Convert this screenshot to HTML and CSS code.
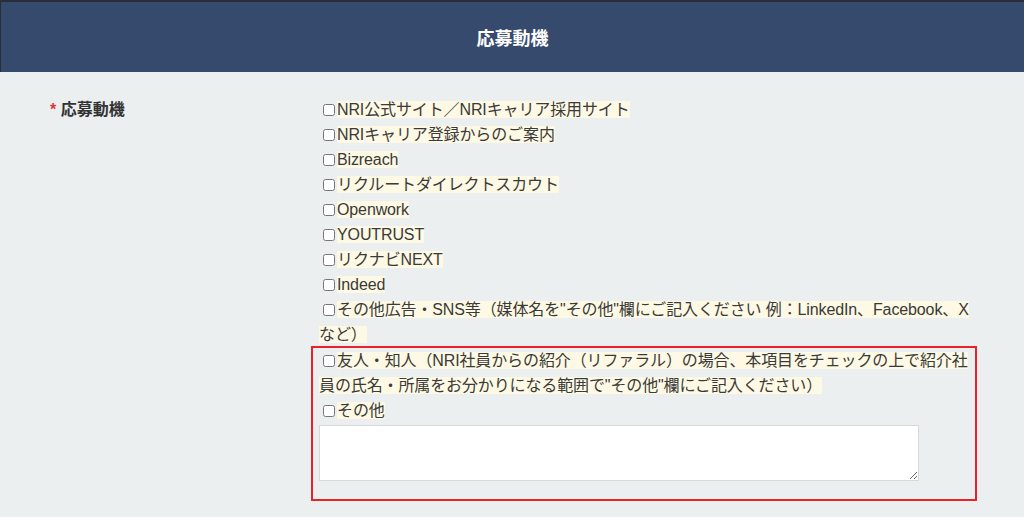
FILE: index.html
```html
<!DOCTYPE html>
<html lang="ja">
<head>
    <meta charset="UTF-8">
    <meta name="viewport" content="width=device-width, initial-scale=1.0">
    <title>応募動機</title>
    <link rel="stylesheet" href="styles.css">
</head>
<body>
    <div class="section-head">
        <h2>応募動機</h2>
    </div>

    <div class="form-row">
        <div class="field-label"><span class="req">*</span> 応募動機</div>

        <div class="field-body">
            <label class="opt"><input type="checkbox"><span class="txt">NRI公式サイト／NRIキャリア採用サイト</span></label>
            <label class="opt"><input type="checkbox"><span class="txt">NRIキャリア登録からのご案内</span></label>
            <label class="opt"><input type="checkbox"><span class="txt">Bizreach</span></label>
            <label class="opt"><input type="checkbox"><span class="txt">リクルートダイレクトスカウト</span></label>
            <label class="opt"><input type="checkbox"><span class="txt">Openwork</span></label>
            <label class="opt"><input type="checkbox"><span class="txt">YOUTRUST</span></label>
            <label class="opt"><input type="checkbox"><span class="txt">リクナビNEXT</span></label>
            <label class="opt"><input type="checkbox"><span class="txt">Indeed</span></label>
            <label class="opt"><input type="checkbox"><span class="txt">その他広告・SNS等（媒体名を"その他"欄にご記入ください 例：LinkedIn、Facebook、Xなど）</span></label>

            <!-- highlighted block -->
            <div class="mark-box">
                <label class="opt"><input type="checkbox"><span class="txt">友人・知人（NRI社員からの紹介（リファラル）の場合、本項目をチェックの上で紹介社員の氏名・所属をお分かりになる範囲で"その他"欄にご記入ください） </span></label>
                <label class="opt"><input type="checkbox"><span class="txt">その他</span></label>
                <textarea class="other-text"></textarea>
            </div>
        </div>
    </div>
</body>
</html>
```

FILE: styles.css
```css
/* Application reason section */
body { margin: 0; font-family: "Liberation Sans", "Noto Sans CJK JP", sans-serif; background-color: #ebeff0; color: #3a3a3a; }
.section-head { background-color: #364a6d; border-top: 2px solid #2b2e38; border-left: 1px solid #2b2e38; height: 70px; display: flex; align-items: center; justify-content: center; }
.section-head h2 { margin: 0; color: #fff; font-size: 18px; font-weight: bold; }
.form-row { display: flex; padding-top: 25px; }
.field-label { width: 269px; padding-left: 50px; font-size: 16px; font-weight: bold; line-height: 25px; color: #333; }
.req { color: #e2343a; }
.field-body { width: 654px; font-size: 16px; line-height: 25px; letter-spacing: -0.12px; }
.opt { display: block; }
.opt input { margin: 3px 2px 3px 4px; width: 12px; height: 12px; vertical-align: -1px; }
.txt { background-color: #fdf9e4; }
.mark-box { border: 2px solid #e8232a; margin: -1px -4px 0 -8px; padding: 0 2px 18px 6px; }
.other-text { display: block; width: 600px; height: 56px; box-sizing: border-box; margin-top: 2px; border: 1px solid #d6dadd; background: #fff; resize: vertical; }
```
